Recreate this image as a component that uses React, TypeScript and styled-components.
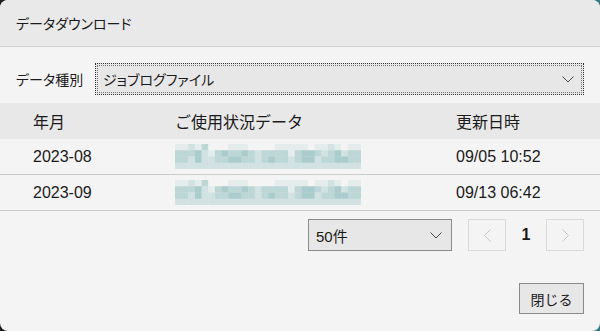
import React from 'react';
import styled, { createGlobalStyle } from 'styled-components';

const GlobalStyle = createGlobalStyle`
    html, body {
        margin: 0;
        padding: 0;
        background: linear-gradient(to right, #1f1f1f 0%, #3a3a3a 60%, #2b7f85 100%);
    }
    #root {
        width: 600px;
        height: 331px;
    }
`;

const FONT = `"Liberation Sans", "Noto Sans CJK JP", sans-serif`;

interface Row {
    month: string;
    updated: string;
}

const rows: Row[] = [
    { month: '2023-08', updated: '09/05 10:52' },
    { month: '2023-09', updated: '09/13 06:42' },
];

// pixelated (mosaic) file name, 28 columns x 4 rows
const MOSAIC_COLORS = ['#f4f4f4', '#e4ecec', '#d2e2e2', '#bdd6d6', '#aacccc', '#93bebe'];
const MOSAIC = [
    '1121300011100001111101121011',
    '3334213433432333313443234233',
    '3324223344332343323442334433',
    '2222222222222222222222222222',
];

const Window = styled.div`
    width: 600px;
    height: 331px;
    border-radius: 8px;
    overflow: hidden;
    background: #f4f4f4;
    display: flex;
    flex-direction: column;
    font-family: ${FONT};
    color: #1b1b1b;
`;

const TitleBar = styled.div`
    height: 46px;
    flex-shrink: 0;
    display: flex;
    align-items: center;
    padding-left: 16px;
    background: #e9e9e9;
    border-bottom: 1px solid #d2d2d2;
    font-size: 14px;
    font-feature-settings: "palt";
`;

const TypeRow = styled.div`
    display: flex;
    align-items: center;
    padding: 16px 16px 0 16px;
    height: 32px;
`;

const Label = styled.div`
    width: 79px;
    font-size: 14px;
    font-feature-settings: "palt";
`;

const Select = styled.div<{ $focused?: boolean; $width?: number; $size?: number }>`
    box-sizing: border-box;
    height: 32px;
    ${({ $width }) => ($width ? `width: ${$width}px;` : 'flex: 1;')}
    display: flex;
    align-items: center;
    justify-content: space-between;
    padding: 0 9px 0 7px;
    background: #e7e7e7;
    border: ${({ $focused }) => ($focused ? '1px dotted #333' : '1px solid #8a8a8a')};
    outline: ${({ $focused }) => ($focused ? '1px dotted #777' : 'none')};
    outline-offset: -3px;
    font-size: ${({ $size }) => $size ?? 14}px;
    font-feature-settings: "palt";
`;

const Table = styled.div`
    margin-top: 8px;
`;

const Grid = styled.div<{ $header?: boolean }>`
    display: grid;
    grid-template-columns: 142px 281px 1fr;
    align-items: center;
    padding-left: 33px;
    height: ${({ $header }) => ($header ? '36px' : '35px')};
    background: ${({ $header }) => ($header ? '#e8e8e8' : 'transparent')};
    border-bottom: ${({ $header }) => ($header ? 'none' : '1px solid #cbcbcb')};
    font-size: 16px;
`;

const Mosaic = styled.svg`
    display: block;
`;

const Pager = styled.div`
    display: flex;
    justify-content: flex-end;
    align-items: center;
    gap: 0;
    padding: 8px 16px 0 0;
`;

const Spacer = styled.div`
    width: 16px;
`;

const PageButton = styled.div`
    box-sizing: border-box;
    width: 38px;
    height: 32px;
    border: 1px solid #d9d9d9;
    display: flex;
    align-items: center;
    justify-content: center;
`;

const PageNumber = styled.div`
    width: 40px;
    text-align: center;
    font-size: 16px;
    font-weight: bold;
`;

const Footer = styled.div`
    flex: 1;
    display: flex;
    justify-content: flex-end;
    align-items: flex-end;
    padding: 0 16px 17px 0;
`;

const CloseButton = styled.button`
    box-sizing: border-box;
    width: 65px;
    height: 31px;
    background: #e7e7e7;
    border: 1px solid #8a8a8a;
    border-radius: 0;
    font-family: ${FONT};
    font-size: 14px;
    color: #1b1b1b;
    padding: 0;
`;

const Chevron: React.FC<{ dir: 'down' | 'left' | 'right'; color?: string }> = ({ dir, color = '#444' }) => {
    if (dir === 'down') {
        return (
            <svg width="12" height="7" viewBox="0 0 12 7">
                <path d="M0.5 0.5 L6 6 L11.5 0.5" fill="none" stroke={color} strokeWidth="1" />
            </svg>
        );
    }
    const d = dir === 'left' ? 'M6.5 0.5 L0.5 6.5 L6.5 12.5' : 'M0.5 0.5 L6.5 6.5 L0.5 12.5';
    return (
        <svg width="7" height="13" viewBox="0 0 7 13">
            <path d={d} fill="none" stroke={color} strokeWidth="1" />
        </svg>
    );
};

const BlurredName: React.FC = () => {
    const size = 6.65;
    return (
        <Mosaic width="186" height="25" viewBox="0 0 186 25">
            {MOSAIC.map((line, r) =>
                line.split('').map((c, i) => (
                    <rect
                        key={`${r}-${i}`}
                        x={i * size}
                        y={r * 6.25}
                        width={size + 0.3}
                        height={6.55}
                        fill={MOSAIC_COLORS[Number(c)]}
                    />
                ))
            )}
        </Mosaic>
    );
};

const App: React.FC = () => {
    return (
        <>
            <GlobalStyle />
            <Window>
                <TitleBar>データダウンロード</TitleBar>

                <TypeRow>
                    <Label>データ種別</Label>
                    <Select $focused>
                        <span>ジョブログファイル</span>
                        <Chevron dir="down" />
                    </Select>
                </TypeRow>

                <Table>
                    <Grid $header>
                        <span>年月</span>
                        <span>ご使用状況データ</span>
                        <span>更新日時</span>
                    </Grid>
                    {rows.map((row) => (
                        <Grid key={row.month}>
                            <span>{row.month}</span>
                            <BlurredName />
                            <span>{row.updated}</span>
                        </Grid>
                    ))}
                </Table>

                <Pager>
                    <Select $width={144} $size={15}>
                        <span>50件</span>
                        <Chevron dir="down" />
                    </Select>
                    <Spacer />
                    <PageButton>
                        <Chevron dir="left" color="#c4c4c4" />
                    </PageButton>
                    <PageNumber>1</PageNumber>
                    <PageButton>
                        <Chevron dir="right" color="#c4c4c4" />
                    </PageButton>
                </Pager>

                <Footer>
                    <CloseButton>閉じる</CloseButton>
                </Footer>
            </Window>
        </>
    );
};

export default App;
